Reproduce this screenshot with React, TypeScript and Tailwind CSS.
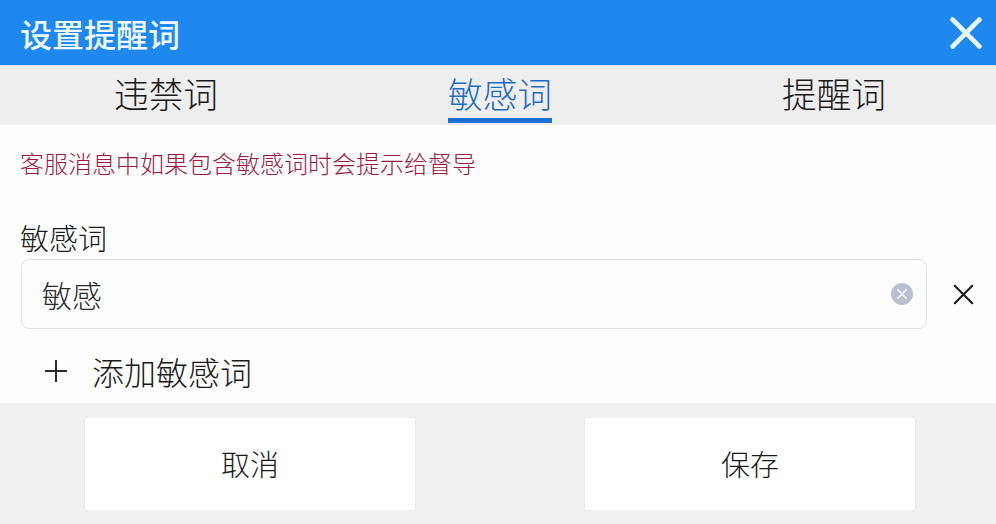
function CrossIcon({ className }: { className: string }) {
  return (
    <svg className={className} viewBox="0 0 24 24" fill="none" stroke="currentColor" strokeLinecap="round">
      <path d="M2 2L22 22M22 2L2 22" />
    </svg>
  );
}

export default function App() {
  return (
    <div className="w-[996px] h-[524px] overflow-hidden bg-white flex flex-col font-['Noto_Sans_CJK_SC','Liberation_Sans',sans-serif] text-[#1a1a1a]">
      <div className="h-[66px] shrink-0 bg-[#1e88ee] border-b border-[#d5e8f8] flex items-center justify-between pl-[20px] pr-[14px]">
        <span className="text-[32px] leading-none text-[#eef8ff] font-medium">设置提醒词</span>
        <CrossIcon className="w-[32px] h-[32px] text-[#e8f8ff] [stroke-width:3.6]" />
      </div>

      <div className="h-[59px] shrink-0 bg-[#eeeeee] grid grid-cols-[332px_336px_332px] text-[34.7px] leading-none font-light">
        <div className="flex justify-center">
          <span className="h-[59px] pt-[10px]">违禁词</span>
        </div>
        <div className="flex justify-center">
          <span className="h-[57px] pt-[10px] border-b-[5px] border-[#1a6fd6] text-[#1f6cc4]">敏感词</span>
        </div>
        <div className="flex justify-center">
          <span className="h-[59px] pt-[10px]">提醒词</span>
        </div>
      </div>

      <div className="flex-1 flex flex-col pl-[20px] pr-[21px] bg-[#fdfdfe]">
        <p className="mt-[23px] text-[24px] leading-[30px] text-[#9c1a40] font-light">客服消息中如果包含敏感词时会提示给督导</p>
        <label className="mt-[39px] text-[29px] leading-[40px] font-light mb-[2px]">敏感词</label>
        <div className="flex items-center ml-[1px]">
          <div className="w-[906px] h-[70px] border border-[#e0e3e8] rounded-[8px] flex items-center justify-between pl-[20px] pr-[13px]">
            <span className="text-[30px] leading-none font-light text-[#2a2a2a]">敏感</span>
            <div className="w-[22px] h-[22px] rounded-full bg-[#b8c2cf] flex items-center justify-center">
              <CrossIcon className="w-[10px] h-[10px] text-[#eef1f5] [stroke-width:4]" />
            </div>
          </div>
          <CrossIcon className="ml-[26px] w-[21px] h-[21px] text-[#1a1a1a] [stroke-width:2.4]" />
        </div>
        <div className="mt-[26px] flex items-center pl-[25px]">
          <svg className="w-[22px] h-[22px] text-[#2a2a2a]" viewBox="0 0 22 22" fill="none" stroke="currentColor" strokeWidth="2">
            <path d="M0 11H22M11 0V22" />
          </svg>
          <span className="ml-[25px] text-[32px] leading-none font-light">添加敏感词</span>
        </div>
      </div>

      <div className="h-[121px] shrink-0 bg-[#eef0f1] pt-[14px] pl-[84px] flex gap-[168px] items-start">
        <button className="w-[332px] h-[94px] bg-white border border-[#e8eaec] rounded-[2px] text-[29px] font-light">取消</button>
        <button className="w-[332px] h-[94px] bg-white border border-[#e8eaec] rounded-[2px] text-[29px] font-light">保存</button>
      </div>
    </div>
  );
}
